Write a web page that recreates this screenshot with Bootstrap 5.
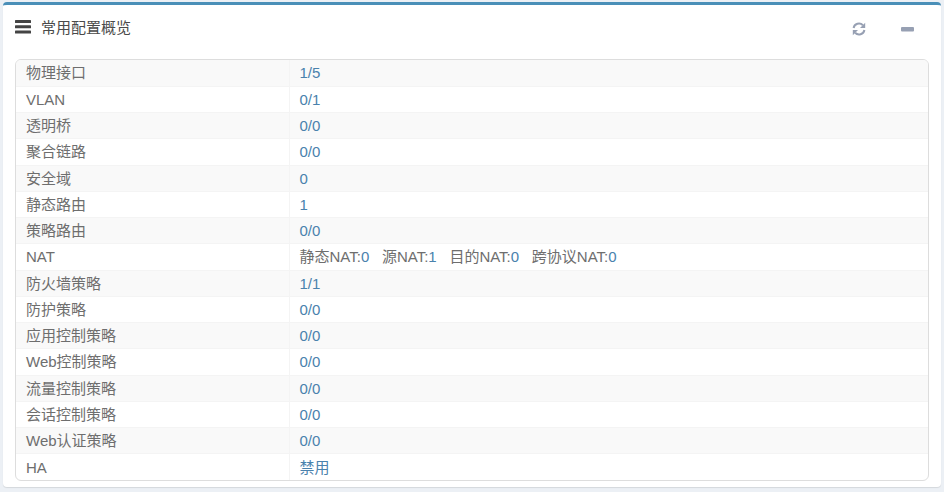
<!DOCTYPE html>
<html lang="zh">
<head>
<meta charset="utf-8">
<title>常用配置概览</title>
<link rel="stylesheet" href="https://cdn.jsdelivr.net/npm/bootstrap@5.3.0/dist/css/bootstrap.min.css">
<style>
html,body{height:100%;margin:0;overflow:hidden}
body{background:#ecf0f5;padding:2px 3px 5px;font-family:"Liberation Sans","Noto Sans CJK SC",sans-serif;font-size:15px;color:#666}
.ov-box{background:#fff;border-top:3px solid #4a8fb8;border-radius:4px;height:485px;box-shadow:0 1px 1px rgba(0,0,0,.1)}
.ov-head{height:54px;padding:0 12px 8px;color:#444}
.ov-title{font-size:15px;color:#4a4a4a;margin-left:10px}
.ov-burger{margin-top:-3px}
.ov-tools{gap:28px;margin-right:11px;margin-top:2px}
.ov-tool{width:21px;height:16px;padding:0;border:0;background:none;line-height:0;color:#97a0b3}
.ov-body{padding:0 12px}
.ov-wrap{border:1px solid #ddd;border-radius:6px;overflow:hidden;height:422px}
.ov-table{margin:0;table-layout:fixed;width:100%;border-collapse:collapse;font-size:15px}
.ov-table td{height:26.25px;padding:1px 10px 0;line-height:20px;border:0;border-top:1px solid #f4f4f4;vertical-align:middle;color:#6e6e6e}
.ov-table tr:first-child td{border-top:0}
.ov-table tr:nth-child(odd) td{background:#f9f9f9}
.ov-table td:first-child{width:273px;border-right:1px solid #f4f4f4}
.ov-table td.ov-num,.ov-table td .ov-num{color:#4a82ad}
.ov-gap{margin-right:12.7px}
</style>
</head>
<body>
<div class="ov-box">
  <div class="ov-head d-flex align-items-center justify-content-between">
    <div class="d-flex align-items-center">
      <svg class="ov-burger" width="16" height="14" viewBox="0 0 16 14" aria-hidden="true"><g fill="#444"><rect x="0" y="0" width="16" height="3" rx=".6"/><rect x="0" y="5.3" width="16" height="3" rx=".6"/><rect x="0" y="10.6" width="16" height="3" rx=".6"/></g></svg>
      <span class="ov-title">常用配置概览</span>
    </div>
    <div class="ov-tools d-flex align-items-center">
      <button class="ov-tool" type="button" aria-label="刷新">
        <svg width="14" height="14" viewBox="0 0 14 14" aria-hidden="true"><g fill="none" stroke="currentColor" stroke-width="2"><path d="M1.6 6A5.4 5.4 0 0 1 10.9 3.2"/><path d="M12.4 8A5.4 5.4 0 0 1 3.1 10.8"/></g><path fill="currentColor" d="M13.2 0.8V6H8z"/><path fill="currentColor" d="M0.8 13.2V8H6z"/></svg>
      </button>
      <button class="ov-tool" type="button" aria-label="收起">
        <svg width="13" height="5" viewBox="0 0 13 5" aria-hidden="true"><rect width="13" height="4.4" rx="1" fill="currentColor"/></svg>
      </button>
    </div>
  </div>
  <div class="ov-body">
    <div class="ov-wrap">
      <table class="table ov-table">
        <tbody>
          <tr><td>物理接口</td><td class="ov-num">1/5</td></tr>
          <tr><td>VLAN</td><td class="ov-num">0/1</td></tr>
          <tr><td>透明桥</td><td class="ov-num">0/0</td></tr>
          <tr><td>聚合链路</td><td class="ov-num">0/0</td></tr>
          <tr><td>安全域</td><td class="ov-num">0</td></tr>
          <tr><td>静态路由</td><td class="ov-num">1</td></tr>
          <tr><td>策略路由</td><td class="ov-num">0/0</td></tr>
          <tr><td>NAT</td><td><span class="ov-gap">静态NAT:<span class="ov-num">0</span></span><span class="ov-gap">源NAT:<span class="ov-num">1</span></span><span class="ov-gap">目的NAT:<span class="ov-num">0</span></span><span>跨协议NAT:<span class="ov-num">0</span></span></td></tr>
          <tr><td>防火墙策略</td><td class="ov-num">1/1</td></tr>
          <tr><td>防护策略</td><td class="ov-num">0/0</td></tr>
          <tr><td>应用控制策略</td><td class="ov-num">0/0</td></tr>
          <tr><td>Web控制策略</td><td class="ov-num">0/0</td></tr>
          <tr><td>流量控制策略</td><td class="ov-num">0/0</td></tr>
          <tr><td>会话控制策略</td><td class="ov-num">0/0</td></tr>
          <tr><td>Web认证策略</td><td class="ov-num">0/0</td></tr>
          <tr><td>HA</td><td class="ov-num">禁用</td></tr>
        </tbody>
      </table>
    </div>
  </div>
</div>
<script src="https://cdn.jsdelivr.net/npm/bootstrap@5.3.0/dist/js/bootstrap.bundle.min.js"></script>
</body>
</html>
